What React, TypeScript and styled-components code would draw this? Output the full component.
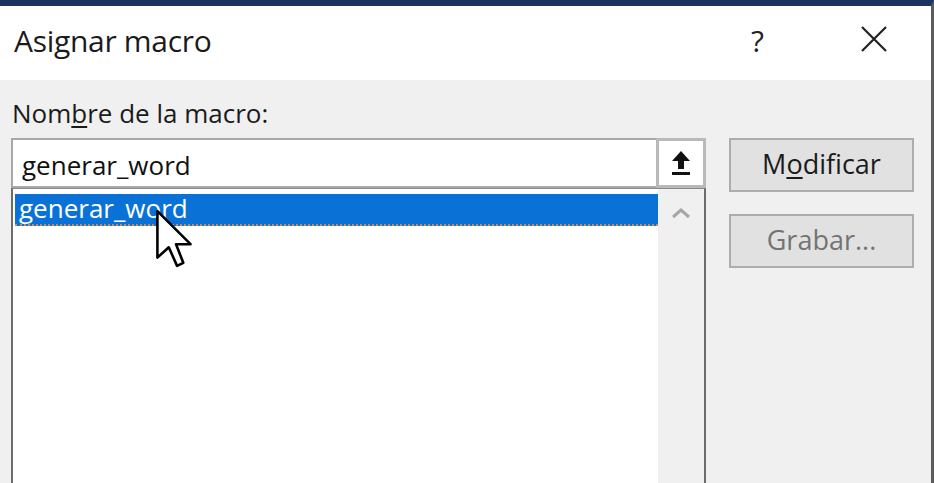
import React from "react";
import styled, { createGlobalStyle } from "styled-components";

const Global = createGlobalStyle`
  html, body { margin: 0; padding: 0; background: #f0f0f0; overflow: hidden; }
  * { box-sizing: border-box; }
`;

const Window = styled.div`
  position: relative;
  width: 934px;
  height: 483px;
  overflow: hidden;
  background: #f0f0f0;
  border-top: 6px solid #1d3461;
  border-right: 3px solid #5c5c5c;
  font-family: "Open Sans", "Noto Sans", sans-serif;
  color: #1a1a1a;
`;

const TitleBar = styled.div`
  height: 74px;
  background: #fff;
  display: flex;
  align-items: center;
  padding-left: 14px;
  padding-right: 44px;
`;

const Title = styled.div`
  flex: 1;
  font-size: 30px;
  letter-spacing: -0.3px;
  color: #1b1b1b;
  padding-bottom: 6px;
`;

const Help = styled.div`
  font-size: 30px;
  width: 20px;
  color: #222;
  margin-right: 90px;
  padding-bottom: 6px;
`;

const Close = styled.div`
  width: 26px;
  height: 26px;
  margin-bottom: 8px;
  display: flex;
`;

const Body = styled.div`
  display: grid;
  grid-template-columns: 695px 185px;
  column-gap: 23px;
  padding-left: 11px;
`;

const LeftCol = styled.div`
  display: flex;
  flex-direction: column;
`;

const Label = styled.div`
  font-size: 26px;
  height: 58px;
  padding-top: 15px;
  padding-left: 1px;
  color: #1b1b1b;
  white-space: nowrap;
`;

const U = styled.span`
  text-decoration: underline;
  text-underline-offset: 3px;
`;

const InputRow = styled.div`
  display: flex;
  height: 50px;
`;

const TextBox = styled.div`
  flex: 1;
  background: #fff;
  border: 2px solid #a8a8a8;
  border-right: none;
  display: flex;
  align-items: center;
  padding-left: 9px;
  padding-top: 3px;
  font-size: 26px;
  color: #111;
`;

const PickButton = styled.div`
  width: 50px;
  background: #fff;
  border: 3px solid #b9b9b9;
  display: flex;
  align-items: center;
  justify-content: center;
`;

const ListBox = styled.div`
  height: 320px;
  background: #fff;
  border: 2px solid #6c6c6c;
  border-top: 1px solid #8a8a8a;
  display: flex;
`;

const ListItems = styled.div`
  flex: 1;
  padding: 5px 0 0 2px;
`;

const Item = styled.div<{ $selected?: boolean }>`
  height: 32px;
  background: ${(p) => (p.$selected ? "#0a72d6" : "transparent")};
  color: ${(p) => (p.$selected ? "#fff" : "#111")};
  font-size: 26px;
  line-height: 28px;
  padding-left: 4px;
  border-bottom: 2px dotted ${(p) => (p.$selected ? "#c98a55" : "transparent")};
`;

const ScrollBar = styled.div`
  width: 46px;
  background: #f0f0f0;
  display: flex;
  justify-content: center;
  padding-top: 18px;
`;

const RightCol = styled.div`
  display: flex;
  flex-direction: column;
  gap: 22px;
  padding-top: 58px;
`;

const Button = styled.div<{ $disabled?: boolean }>`
  height: 54px;
  background: #e1e1e1;
  border: 2px solid #adadad;
  display: flex;
  align-items: center;
  justify-content: center;
  font-size: 27px;
  color: ${(p) => (p.$disabled ? "#737373" : "#1b1b1b")};
  padding-bottom: 3px;
`;

const Cursor = styled.svg`
  position: absolute;
  left: 155px;
  top: 203px;
`;

export default function App() {
  return (
    <>
      <Global />
      <Window>
        <TitleBar>
          <Title>Asignar macro</Title>
          <Help>?</Help>
          <Close>
            <svg width="26" height="26" viewBox="0 0 26 26">
              <path d="M1 1 L25 25 M25 1 L1 25" stroke="#222" strokeWidth="2.2" />
            </svg>
          </Close>
        </TitleBar>
        <Body>
          <LeftCol>
            <Label>
              Nom<U>b</U>re de la macro:
            </Label>
            <InputRow>
              <TextBox>generar_word</TextBox>
              <PickButton>
                <svg width="22" height="26" viewBox="0 0 22 26">
                  <path d="M11 1 L20 11 L14 11 L14 19 L8 19 L8 11 L2 11 Z" fill="#111" />
                  <rect x="2" y="22" width="18" height="3" fill="#111" />
                </svg>
              </PickButton>
            </InputRow>
            <ListBox>
              <ListItems>
                <Item $selected>generar_word</Item>
              </ListItems>
              <ScrollBar>
                <svg width="20" height="12" viewBox="0 0 20 12">
                  <path d="M2 10 L10 3 L18 10" stroke="#a6a6a6" strokeWidth="3" fill="none" />
                </svg>
              </ScrollBar>
            </ListBox>
          </LeftCol>
          <RightCol>
            <Button>
              M<U>o</U>dificar
            </Button>
            <Button $disabled>Grabar...</Button>
          </RightCol>
        </Body>
        <Cursor width="40" height="60" viewBox="-2 -2 38 58">
          <path
            d="M0 0 L0 45 L11 35 L19 53 L25 50 L18 32 L32 32 Z"
            fill="#fff"
            stroke="#000"
            strokeWidth="2.5"
            strokeLinejoin="round"
          />
        </Cursor>
      </Window>
    </>
  );
}
